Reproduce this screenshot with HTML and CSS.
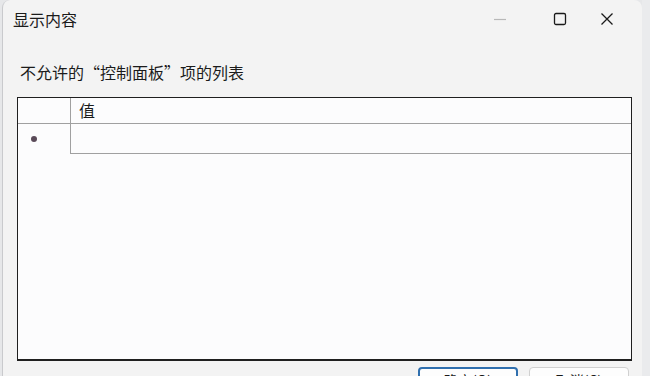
FILE: index.html
```html
<!DOCTYPE html>
<html lang=zh-CN>
<head>
  <meta charset=utf-8>
  <title>显示内容</title>
  <meta name=viewport content='width=device-width, initial-scale=1.0'>
<link rel="stylesheet" href="styles.css">
</head>
<body>
  <div class=window>
    <div class=titlebar>
      <span class=title>显示内容</span>
      <div class=controls>
        <span class='ctl min'><svg width=14 height=14 viewBox='0 0 14 14'><path d='M1 7.5h12' stroke='#b8b8b8' stroke-width=1.2 fill=none /></svg></span>
        <span class='ctl max'><svg width=14 height=14 viewBox='0 0 14 14'><rect x=1.5 y=1.5 width=11 height=11 rx=1.5 stroke='#1a1a1a' stroke-width=1.3 fill=none /></svg></span>
        <span class='ctl close'><svg width=14 height=14 viewBox='0 0 14 14'><path d='M1.5 1.5l11 11M12.5 1.5l-11 11' stroke='#1a1a1a' stroke-width=1.3 fill=none /></svg></span>
      </div>
    </div>

    <div class=content>
      <p class=caption>不允许的“控制面板”项的列表</p>

      <div class=grid>
        <div class='cell corner'></div>
        <div class='cell head'>值</div>
        <div class='cell rowhead'><span class=dot></span></div>
        <div class='cell value'></div>
        <div class=blank></div>
      </div>

      <div class=buttons>
        <button class='btn primary'>确定(O)</button>
        <button class=btn>取消(C)</button>
      </div>
    </div>
  </div>
  <div class=edge></div>
</body>
</html>
```

FILE: styles.css
```css
/* page shell */

html, body {
  margin: 0;
  height: 100%;
  overflow: hidden;
}

body {
  display: flex;
  background: #e6e7e9;
  font-family: "Noto Sans CJK SC", "Noto Sans", sans-serif;
  color: #1b1b1b;
}

.window {
  width: 639px;
  margin-left: 2px;
  height: 100%;
  background: #f3f3f3;
  border-radius: 8px 8px 0 0;
  border-left: 1px solid #c9cacd;
  display: flex;
  flex-direction: column;
}

.edge {
  flex: 1;
  background: #eaebed;
}

/* title bar */

.titlebar {
  flex: none;
  height: 36px;
  display: flex;
  align-items: center;
  justify-content: space-between;
  padding-left: 10px;
}

.title {
  font-size: 16px;
  margin-top: 1px;
}

.controls {
  display: flex;
  height: 100%;
  padding-top: 2px;
  box-sizing: border-box;
}

.ctl {
  width: 60px;
  display: flex;
  align-items: center;
  justify-content: center;
}

.ctl.close {
  width: 52px;
  justify-content: flex-start;
  padding-left: 10px;
  box-sizing: border-box;
}

/* dialog body */

.content {
  flex: none;
  padding: 0 8px 0 14px;
  display: flex;
  flex-direction: column;
}

.caption {
  margin: 26px 0 0 3px;
  font-size: 16px;
  line-height: 20px;
  height: 35px;
}

.grid {
  flex: none;
  height: 261px;
  width: 613px;
  border: 1px solid #1f1f1f;
  border-bottom-width: 2px;
  background: #fcfcfd;
  display: grid;
  grid-template-columns: 53px 1fr;
  grid-template-rows: 26px 30px 1fr;
}

.cell {
  box-sizing: border-box;
}

.corner,
.head {
  border-bottom: 1px solid #a0a0a0;
}

.corner {
  border-right: 1px solid #a0a0a0;
}

.head {
  font-size: 16px;
  line-height: 24px;
  padding-left: 8px;
}

.rowhead {
  border-right: 1px solid #a0a0a0;
  display: flex;
  align-items: center;
  padding-left: 13px;
}

.value {
  border-bottom: 1px solid #a0a0a0;
}

.dot {
  width: 6px;
  height: 6px;
  border-radius: 50%;
  background: #5a4a58;
}

.blank {
  grid-column: 1 / 3;
}

/* footer */

.buttons {
  display: flex;
  justify-content: flex-end;
  gap: 11px;
  padding: 6px 5px 0 0;
}

.btn {
  width: 100px;
  height: 26px;
  font-family: inherit;
  font-size: 14px;
  background: #fdfdfd;
  border: 1px solid #d0d0d0;
  border-radius: 4px;
  color: #1b1b1b;
  padding: 0;
}

.btn.primary {
  border: 2px solid #2f6fae;
}
```
